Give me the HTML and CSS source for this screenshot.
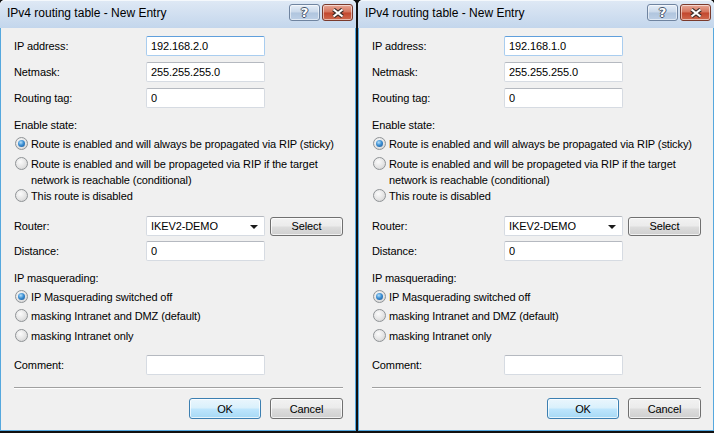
FILE: index.html
```html
<!DOCTYPE html>
<html lang="en">
<head>
    <meta charset="UTF-8">
    <meta name="viewport" content="width=device-width, initial-scale=1.0">
    <title>IPv4 routing table - New Entry</title>
    <link rel="stylesheet" href="styles.css">
</head>
<body>
    <div class="desktop">

        <!-- Left dialog -->
        <div class="dialog">
            <div class="titlebar">
                <span class="title">IPv4 routing table - New Entry</span>
                <div class="caption-buttons">
                    <button class="cap-btn help-btn">?</button>
                    <button class="cap-btn close-btn">
                        <svg width="14" height="10" viewBox="0 0 14 10"><path d="M2.5 1.5 L11.5 8.5 M11.5 1.5 L2.5 8.5" stroke="#3a2b28" stroke-width="4.2" fill="none"/><path d="M2.5 1.5 L11.5 8.5 M11.5 1.5 L2.5 8.5" stroke="#fff" stroke-width="2.2" fill="none"/></svg>
                    </button>
                </div>
            </div>
            <div class="content">
                <div class="field-row first">
                    <label>IP address:</label>
                    <input type="text" class="text-input focused" value="192.168.2.0">
                </div>
                <div class="field-row">
                    <label>Netmask:</label>
                    <input type="text" class="text-input" value="255.255.255.0">
                </div>
                <div class="field-row">
                    <label>Routing tag:</label>
                    <input type="text" class="text-input" value="0">
                </div>

                <div class="group-label state-label">Enable state:</div>
                <div class="radio-row r-first"><span class="radio checked"></span><span>Route is enabled and will always be propagated via RIP (sticky)</span></div>
                <div class="radio-row r-second"><span class="radio"></span><span>Route is enabled and will be propageted via RIP if the target<br>network is reachable (conditional)</span></div>
                <div class="radio-row r-third"><span class="radio"></span><span>This route is disabled</span></div>

                <div class="field-row router-row">
                    <label>Router:</label>
                    <div class="combo"><span>IKEV2-DEMO</span><span class="combo-arrow"></span></div>
                    <button class="btn select-btn">Select</button>
                </div>
                <div class="field-row distance-row">
                    <label>Distance:</label>
                    <input type="text" class="text-input" value="0">
                </div>

                <div class="group-label masq-label">IP masquerading:</div>
                <div class="radio-row m-row"><span class="radio checked"></span><span>IP Masquerading switched off</span></div>
                <div class="radio-row m-row"><span class="radio"></span><span>masking Intranet and DMZ (default)</span></div>
                <div class="radio-row m-row m-last"><span class="radio"></span><span>masking Intranet only</span></div>

                <div class="field-row comment-row">
                    <label>Comment:</label>
                    <input type="text" class="text-input" value="">
                </div>

                <div class="separator"></div>

                <div class="button-row">
                    <button class="btn default-btn">OK</button>
                    <button class="btn">Cancel</button>
                </div>
            </div>
        </div>

        <!-- Right dialog -->
        <div class="dialog">
            <div class="titlebar">
                <span class="title">IPv4 routing table - New Entry</span>
                <div class="caption-buttons">
                    <button class="cap-btn help-btn">?</button>
                    <button class="cap-btn close-btn">
                        <svg width="14" height="10" viewBox="0 0 14 10"><path d="M2.5 1.5 L11.5 8.5 M11.5 1.5 L2.5 8.5" stroke="#3a2b28" stroke-width="4.2" fill="none"/><path d="M2.5 1.5 L11.5 8.5 M11.5 1.5 L2.5 8.5" stroke="#fff" stroke-width="2.2" fill="none"/></svg>
                    </button>
                </div>
            </div>
            <div class="content">
                <div class="field-row first">
                    <label>IP address:</label>
                    <input type="text" class="text-input focused" value="192.168.1.0">
                </div>
                <div class="field-row">
                    <label>Netmask:</label>
                    <input type="text" class="text-input" value="255.255.255.0">
                </div>
                <div class="field-row">
                    <label>Routing tag:</label>
                    <input type="text" class="text-input" value="0">
                </div>

                <div class="group-label state-label">Enable state:</div>
                <div class="radio-row r-first"><span class="radio checked"></span><span>Route is enabled and will always be propagated via RIP (sticky)</span></div>
                <div class="radio-row r-second"><span class="radio"></span><span>Route is enabled and will be propageted via RIP if the target<br>network is reachable (conditional)</span></div>
                <div class="radio-row r-third"><span class="radio"></span><span>This route is disabled</span></div>

                <div class="field-row router-row">
                    <label>Router:</label>
                    <div class="combo"><span>IKEV2-DEMO</span><span class="combo-arrow"></span></div>
                    <button class="btn select-btn">Select</button>
                </div>
                <div class="field-row distance-row">
                    <label>Distance:</label>
                    <input type="text" class="text-input" value="0">
                </div>

                <div class="group-label masq-label">IP masquerading:</div>
                <div class="radio-row m-row"><span class="radio checked"></span><span>IP Masquerading switched off</span></div>
                <div class="radio-row m-row"><span class="radio"></span><span>masking Intranet and DMZ (default)</span></div>
                <div class="radio-row m-row m-last"><span class="radio"></span><span>masking Intranet only</span></div>

                <div class="field-row comment-row">
                    <label>Comment:</label>
                    <input type="text" class="text-input" value="">
                </div>

                <div class="separator"></div>

                <div class="button-row">
                    <button class="btn default-btn">OK</button>
                    <button class="btn">Cancel</button>
                </div>
            </div>
        </div>

    </div>
</body>
</html>
```

FILE: styles.css
```css
html, body {
    margin: 0;
    padding: 0;
}
body {
    width: 714px;
    height: 433px;
    overflow: hidden;
    background-color: #101010;
    font-family: "Liberation Sans", Arial, sans-serif;
    font-size: 11px;
    letter-spacing: -0.1px;
    color: #000;
}
.desktop {
    display: flex;
    gap: 2px;
    height: 431px;
}
.dialog {
    width: 356px;
    display: flex;
    flex-direction: column;
    background: #c6d8ed;
    border-radius: 5px 5px 0 0;
}
.titlebar {
    height: 28px;
    flex: none;
    display: flex;
    justify-content: space-between;
    align-items: flex-start;
    padding: 0 3px 0 7px;
    background: linear-gradient(#dfe9f5, #c3d6ec);
    border-radius: 5px 5px 0 0;
    box-shadow: inset 0 1px 0 #f4f8fc;
}
.title {
    font-size: 12px;
    letter-spacing: 0;
    line-height: 27px;
}
.caption-buttons {
    display: flex;
    gap: 2px;
    margin-top: 4px;
}
.cap-btn {
    width: 31px;
    height: 17px;
    padding: 0;
    display: flex;
    align-items: center;
    justify-content: center;
    border: 1px solid #6f84a0;
    border-radius: 3px;
    box-shadow: inset 0 0 0 1px rgba(255, 255, 255, 0.55);
}
.help-btn {
    background: linear-gradient(#e6eef8 0%, #c9d8ea 48%, #b0c5de 52%, #bccfe6 100%);
    color: #fff;
    font-family: "DejaVu Sans", sans-serif;
    font-weight: bold;
    font-size: 13px;
    line-height: 15px;
    text-shadow: 1px 0 #45536a, -1px 0 #45536a, 0 1px #45536a, 0 -1px #45536a;
}
.close-btn {
    border-color: #7a3a2c;
    background: linear-gradient(#e8a796 0%, #d4735b 48%, #c2462d 52%, #cf6a4f 100%);
}
.content {
    flex: 1;
    background: #f0f0f0;
    border: 1px solid #55a8de;
    border-top: none;
    padding: 8px 12px 0 13px;
}
.field-row {
    display: flex;
    align-items: center;
    height: 20px;
    margin-top: 6px;
}
.field-row.first {
    margin-top: 0;
}
.field-row label {
    width: 132px;
    flex: none;
}
.text-input {
    width: 119px;
    height: 20px;
    box-sizing: border-box;
    margin: 0;
    padding: 0 4px;
    border: 1px solid #d6dbe2;
    border-top-color: #b5b9c0;
    border-radius: 2px;
    background: #fff;
    font: inherit;
    letter-spacing: inherit;
    color: #000;
    outline: none;
}
.text-input.focused {
    border-color: #a9cdef;
    border-top-color: #5f9fdc;
}
.group-label {
    line-height: 16px;
}
.state-label {
    margin-top: 9px;
}
.masq-label {
    margin-top: 9px;
}
.radio-row {
    display: flex;
    align-items: flex-start;
    line-height: 16px;
}
.r-first {
    margin-top: 3px;
}
.r-second {
    margin-top: 4px;
}
.r-third {
    margin-top: 0;
}
.m-row {
    margin-top: 3px;
}
.m-last {
    margin-top: 4px;
}
.radio {
    width: 13px;
    height: 13px;
    box-sizing: border-box;
    flex: none;
    margin: 1px 3px 0 1px;
    border: 1px solid #8f9396;
    border-radius: 50%;
    background: radial-gradient(circle at 40% 35%, #fbfbfb 0%, #e4e4e4 55%, #cdcdcd 100%);
    position: relative;
}
.radio.checked::after {
    content: "";
    position: absolute;
    left: 2px;
    top: 2px;
    width: 7px;
    height: 7px;
    border-radius: 50%;
    background: radial-gradient(circle at 40% 35%, #b6e0fa 0%, #3c8fd3 45%, #164f8e 100%);
}
.router-row {
    margin-top: 12px;
}
.distance-row {
    margin-top: 5px;
}
.comment-row {
    margin-top: 11px;
}
.combo {
    width: 119px;
    height: 20px;
    box-sizing: border-box;
    display: flex;
    align-items: center;
    justify-content: space-between;
    padding: 0 6px 0 4px;
    background: #fff;
    border: 1px solid #d6dbe2;
    border-top-color: #b5b9c0;
    border-radius: 2px;
}
.combo-arrow {
    width: 0;
    height: 0;
    border-left: 4px solid transparent;
    border-right: 4px solid transparent;
    border-top: 4px solid #1a1a1a;
    margin-top: 1px;
}
.btn {
    height: 21px;
    width: 73px;
    padding: 0;
    border: 1px solid #707070;
    border-radius: 3px;
    background: linear-gradient(#f2f2f2 0%, #ebebeb 48%, #dddddd 52%, #cfcfcf 100%);
    box-shadow: inset 0 0 0 1px rgba(255, 255, 255, 0.7);
    font: inherit;
    letter-spacing: inherit;
    color: #000;
}
.select-btn {
    height: 19px;
    margin-left: 5px;
}
.default-btn {
    width: 72px;
    border-color: #3c7fb1;
    background: linear-gradient(#eaf6fd 0%, #d9f0fc 48%, #bee6fd 52%, #a7d9f5 100%);
}
.separator {
    margin-top: 12px;
    border-top: 1px solid #a0a0a0;
    border-bottom: 1px solid #ffffff;
}
.button-row {
    display: flex;
    justify-content: flex-end;
    gap: 9px;
    margin-top: 9px;
}
```
